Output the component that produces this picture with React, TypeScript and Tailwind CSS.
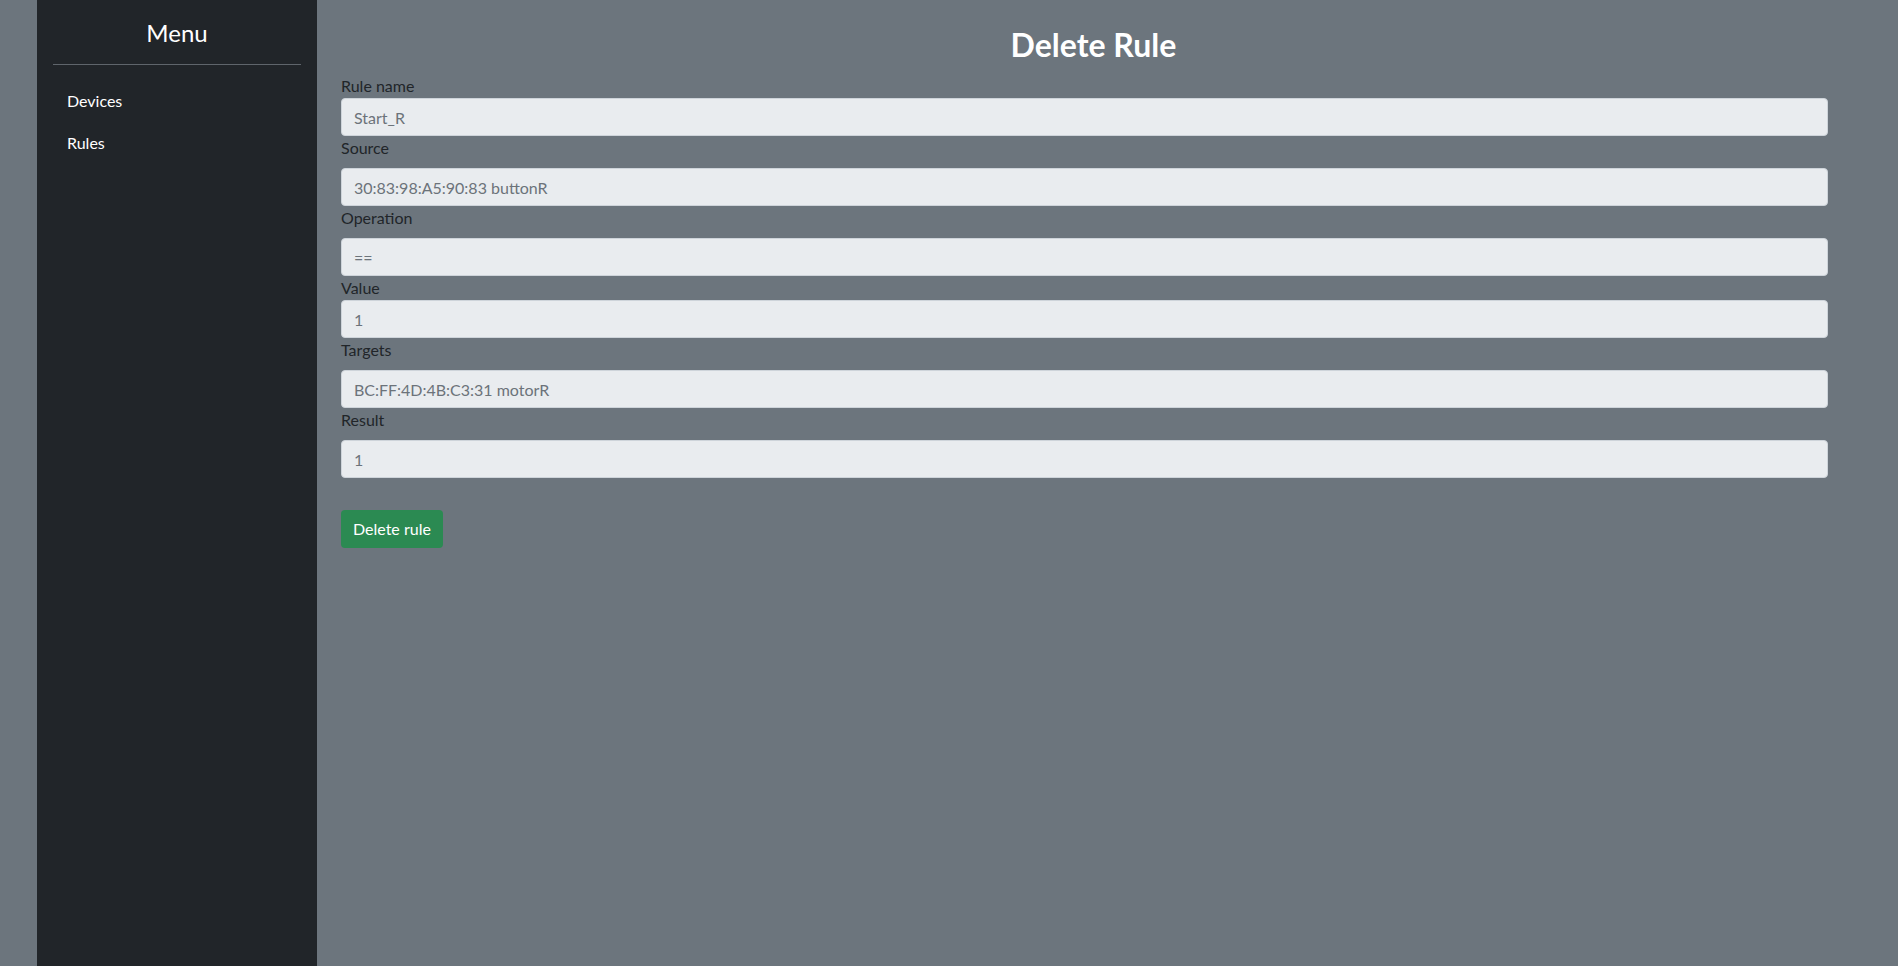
import React from "react";

const fields = [
  { label: "Rule name", value: "Start_R", gap: false },
  { label: "Source", value: "30:83:98:A5:90:83 buttonR", gap: true },
  { label: "Operation", value: "==", gap: true },
  { label: "Value", value: "1", gap: false },
  { label: "Targets", value: "BC:FF:4D:4B:C3:31 motorR", gap: true },
  { label: "Result", value: "1", gap: true },
];

function SideBar() {
  return (
    <nav className="w-[280px] shrink-0 bg-[#212529] text-white px-4 min-h-[966px]">
      <h4 className="text-center text-[24px] leading-[29px] pt-[18px] pb-[17px]">Menu</h4>
      <hr className="border-0 border-t border-[#5f656b]" />
      <ul className="pt-[15px]">
        {["Devices", "Rules"].map((item) => (
          <li key={item}>
            <a href="#" className="block h-[42px] leading-[42px] pl-[14px] text-[16px] text-white">
              {item}
            </a>
          </li>
        ))}
      </ul>
    </nav>
  );
}

export default function App() {
  return (
    <div
      className="flex min-h-[966px] bg-[#6c757d] pl-[37px]"
      style={{ fontFamily: '"Segoe UI", Lato, "Open Sans", sans-serif' }}
    >
      <SideBar />
      <main className="flex-1 pl-6 pr-[70px] pt-[26px]">
        <h2 className="text-center text-white font-bold text-[32px] leading-[38px] mb-[10px] pl-[18px]">
          Delete Rule
        </h2>
        <form>
          {fields.map((f) => (
            <div key={f.label}>
              <label className={`block text-[16px] leading-[24px] text-[#212529] ${f.gap ? "mb-2" : ""}`}>
                {f.label}
              </label>
              <input
                disabled
                value={f.value}
                readOnly
                className="block w-full h-[38px] px-3 text-[16px] bg-[#e9ecef] border border-[#ced4da] rounded-[4px] text-[#6c737a]"
              />
            </div>
          ))}
          <button
            type="button"
            className="mt-8 h-[38px] px-3 text-[16px] text-white bg-[#2b8a52] rounded-[4px]"
          >
            Delete rule
          </button>
        </form>
      </main>
    </div>
  );
}
